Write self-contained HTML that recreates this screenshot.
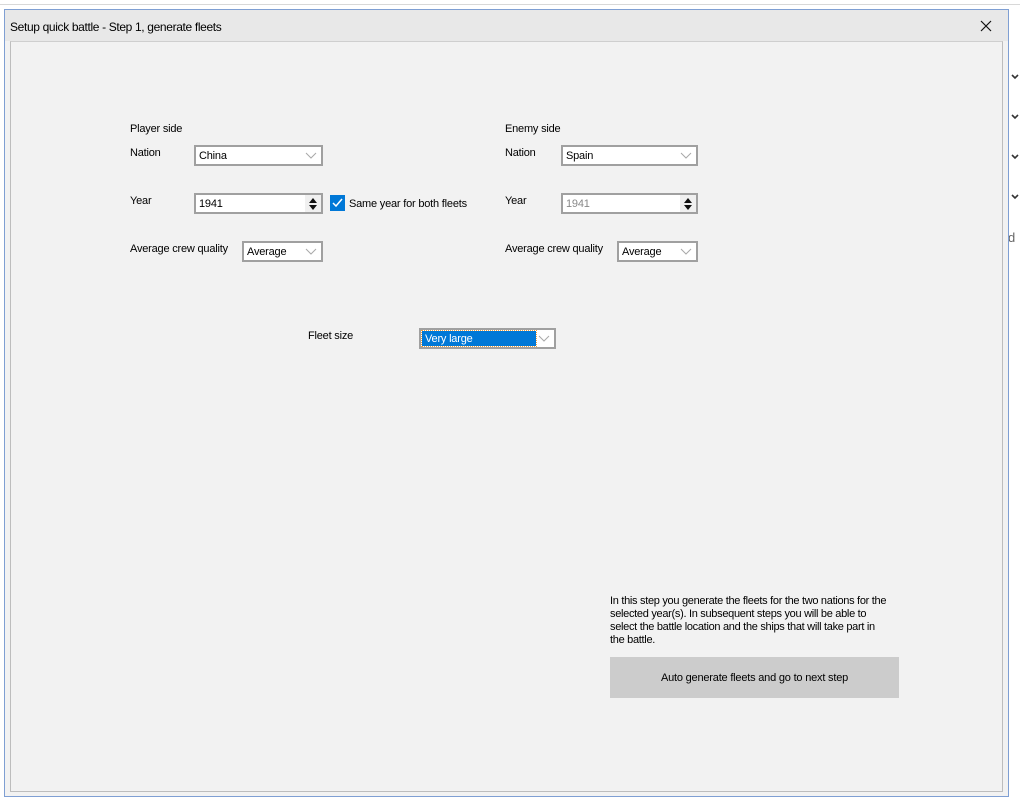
<!DOCTYPE html>
<html><head><meta charset="utf-8"><style>
*{margin:0;padding:0;box-sizing:border-box}
body{width:1020px;height:801px;background:#fff;position:relative;overflow:hidden;font-family:"Liberation Sans",Arial,sans-serif;font-size:11px;letter-spacing:-0.2px;color:#000}
.a{position:absolute;white-space:nowrap}
.win{position:absolute;left:4px;top:9px;width:1005px;height:788px;border:1px solid #7f9fd3;background:#f2f2f2}
.title{position:absolute;left:0;top:0;width:1003px;height:31px;background:#e8e8e8}
.panel{position:absolute;left:5px;top:31px;width:993px;height:751px;border:1px solid #bdbdbd;border-top:1px solid #cfcfcf;background:#f2f2f2}
.box{position:absolute;border:2px solid #a0a0a0;background:#fff;height:21px;padding-left:3px;line-height:18px;font-size:11px}
.chev{position:absolute;right:4px;top:5px}
.spin{position:absolute;right:0;top:0;width:16px;height:17px;background:#f0f0f0}
</style></head><body>
<div class="a" style="left:0;top:4px;width:1020px;height:1px;background:#d8d8d8"></div>
<svg class="a" style="left:1008px;top:60px" width="12" height="190"><g fill="none" stroke="#333" stroke-width="1.6"><path d="M4 15l3 3 3-3"/><path d="M4 55l3 3 3-3"/><path d="M4 95l3 3 3-3"/><path d="M4 135l3 3 3-3"/></g><text x="0" y="182" font-size="13" fill="#666" font-family="Liberation Sans">d</text></svg>
<div class="win">
<div class="title"><span class="a" style="left:5px;top:10px;font-size:12px;letter-spacing:-0.35px">Setup quick battle - Step 1, generate fleets</span>
<svg class="a" style="left:975px;top:10px" width="12" height="12"><path d="M1 1L11 11M11 1L1 11" stroke="#111" stroke-width="1.2"/></svg></div>
<div class="panel"></div>
</div>
<span class="a" style="left:130px;top:123px">Player side</span>
<span class="a" style="left:130px;top:147px">Nation</span>
<span class="a" style="left:130px;top:195px">Year</span>
<span class="a" style="left:130px;top:243px">Average crew quality</span>
<span class="a" style="left:505px;top:123px">Enemy side</span>
<span class="a" style="left:505px;top:147px">Nation</span>
<span class="a" style="left:505px;top:195px">Year</span>
<span class="a" style="left:505px;top:243px">Average crew quality</span>
<span class="a" style="left:308px;top:330px">Fleet size</span>

<div class="box" style="left:194px;top:145px;width:129px">China<svg class="chev" width="12" height="8"><path d="M1 1l5 5 5-5" fill="none" stroke="#a8a8a8"/></svg></div>
<div class="box" style="left:194px;top:193px;width:129px">1941<div class="spin"><svg width="16" height="17"><path d="M4 8l4-5 4 5zM4 10l4 5 4-5z" fill="#111"/></svg></div></div>
<div class="a" style="left:330px;top:195px;width:15px;height:16px;background:#0078d7"><svg width="15" height="16"><path d="M3 8l3 3 6-7" fill="none" stroke="#fff" stroke-width="1.5"/></svg></div>
<span class="a" style="left:349px;top:198px">Same year for both fleets</span>
<div class="box" style="left:242px;top:241px;width:81px">Average<svg class="chev" width="12" height="8"><path d="M1 1l5 5 5-5" fill="none" stroke="#a8a8a8"/></svg></div>

<div class="box" style="left:561px;top:145px;width:137px">Spain<svg class="chev" width="12" height="8"><path d="M1 1l5 5 5-5" fill="none" stroke="#a8a8a8"/></svg></div>
<div class="box" style="left:561px;top:193px;width:137px;color:#888">1941<div class="spin"><svg width="16" height="17"><path d="M4 8l4-5 4 5zM4 10l4 5 4-5z" fill="#111"/></svg></div></div>
<div class="box" style="left:617px;top:241px;width:81px">Average<svg class="chev" width="12" height="8"><path d="M1 1l5 5 5-5" fill="none" stroke="#a8a8a8"/></svg></div>

<div class="box" style="left:419px;top:328px;width:137px;padding-left:1px"><span style="display:inline-block;background:#0078d7;color:#fff;width:114px;height:15px;line-height:16px;padding-left:3px;outline:1px dotted #f0a040;vertical-align:top;margin-top:1px">Very large</span><svg class="chev" width="12" height="8"><path d="M1 1l5 5 5-5" fill="none" stroke="#a8a8a8"/></svg></div>

<div class="a" style="left:610px;top:595px;white-space:normal;width:300px;line-height:13px;letter-spacing:-0.3px">In this step you generate the fleets for the two nations for the<br>selected year(s). In subsequent steps you will be able to<br>select the battle location and the ships that will take part in<br>the battle.</div>
<div class="a" style="left:610px;top:657px;width:289px;height:41px;background:#cccccc;text-align:center;line-height:42px">Auto generate fleets and go to next step</div>
</body></html>
